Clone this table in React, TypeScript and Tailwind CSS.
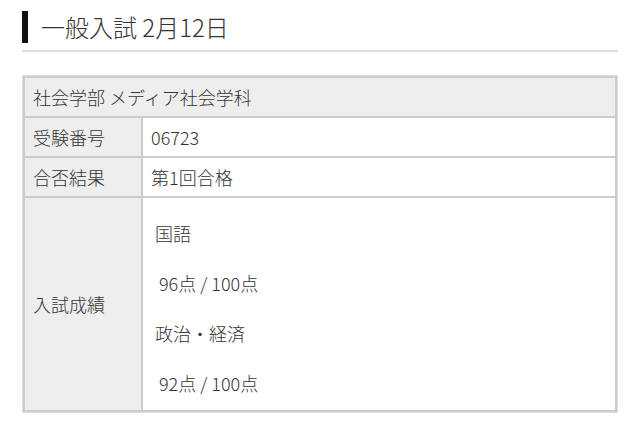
import React from "react";

export default function App() {
  const font = { fontFamily: '"Noto Sans CJK JP", "Noto Sans", sans-serif' };
  const labelCls =
    "border-2 border-[#cccccc] bg-[#eeeeee] px-2 py-[6px] leading-[26px] text-left font-light w-[118px] align-middle";
  const valueCls = "border-2 border-[#cccccc] bg-white px-2 py-[6px] leading-[26px]";
  return (
    <div className="w-[640px] h-[423px] bg-white text-[#333333] font-light px-[22px]" style={font}>
      <div className="pt-[11px] pb-[7px] border-b-2 border-[#dddddd] flex items-center">
        <div className="w-[6px] h-[32px] bg-[#111111]" />
        <h1 className="ml-[13px] text-[24px] leading-[32px] font-light">一般入試 2月12日</h1>
      </div>
      <div className="mt-[23px] border border-[#dddddd]">
        <table className="w-full border-collapse text-[18px]">
          <tbody>
            <tr>
              <th colSpan={2} className="border-2 border-[#cccccc] bg-[#eeeeee] px-2 py-[6px] leading-[26px] text-left font-light">
                社会学部 メディア社会学科
              </th>
            </tr>
            <tr>
              <th className={labelCls}>受験番号</th>
              <td className={valueCls}>06723</td>
            </tr>
            <tr>
              <th className={labelCls}>合否結果</th>
              <td className={valueCls}>第1回合格</td>
            </tr>
            <tr>
              <th className={labelCls}>入試成績</th>
              <td className="border-2 border-[#cccccc] bg-white pl-3 pr-2 pt-[10px] pb-[2px]">
                <div className="h-[50px] flex items-center">国語</div>
                <div className="h-[50px] flex items-center whitespace-pre"> 96点 / 100点</div>
                <div className="h-[50px] flex items-center">政治・経済</div>
                <div className="h-[50px] flex items-center whitespace-pre"> 92点 / 100点</div>
              </td>
            </tr>
          </tbody>
        </table>
      </div>
    </div>
  );
}
